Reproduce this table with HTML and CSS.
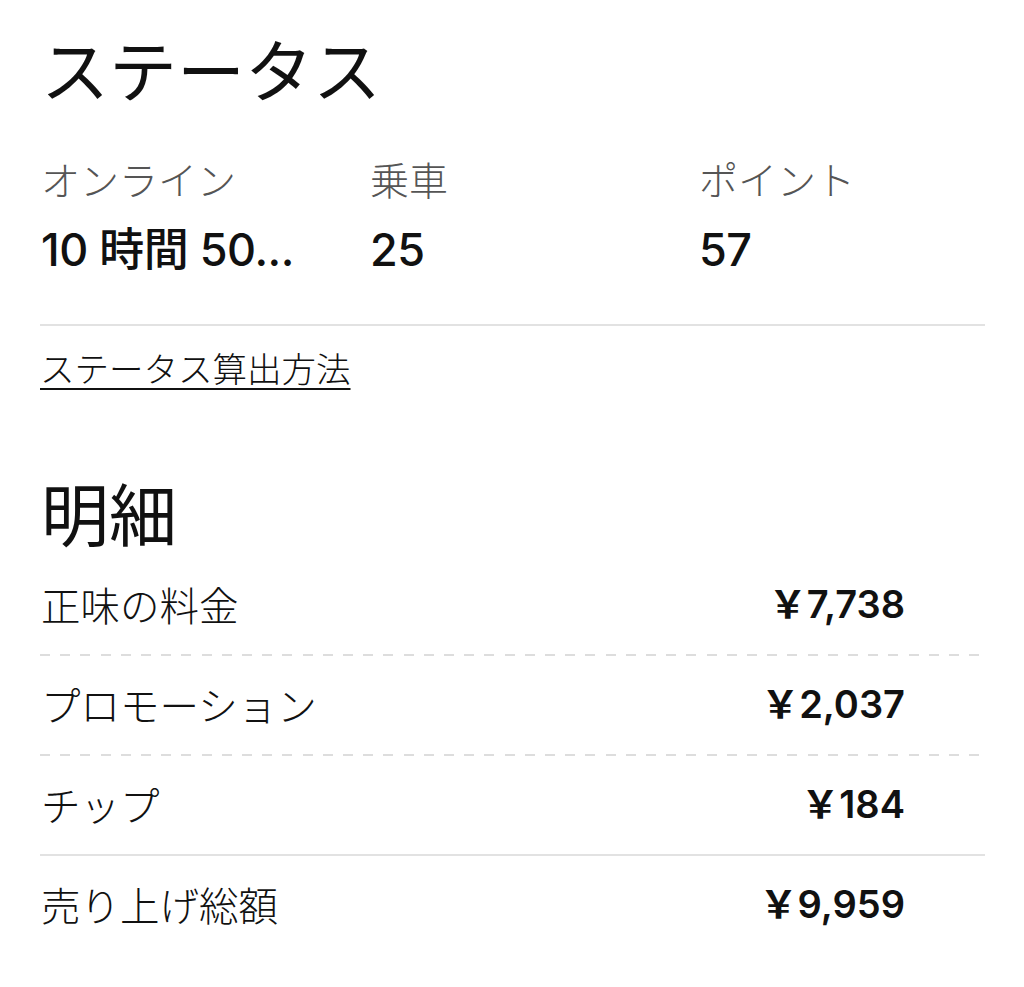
FILE: index.html
```html
<!DOCTYPE html>
<html lang="ja">
<head>
<meta charset="utf-8">
<title>ステータス</title>
<link rel="stylesheet" href="styles.css">
</head>
<body>
<main class="page">
  <h1 class="title">ステータス</h1>
  <section class="stats">
    <div class="stat">
      <div class="stat-label">オンライン</div>
      <div class="stat-value">10 時間 50...</div>
    </div>
    <div class="stat">
      <div class="stat-label">乗車</div>
      <div class="stat-value">25</div>
    </div>
    <div class="stat">
      <div class="stat-label">ポイント</div>
      <div class="stat-value">57</div>
    </div>
  </section>
  <a class="link" href="#">ステータス算出方法</a>

  <h2 class="title title-detail">明細</h2>
  <section class="rows">
    <div class="row dashed">
      <span class="row-label">正味の料金</span>
      <span class="row-amount">￥7,738</span>
    </div>
    <div class="row dashed">
      <span class="row-label">プロモーション</span>
      <span class="row-amount">￥2,037</span>
    </div>
    <div class="row solid">
      <span class="row-label">チップ</span>
      <span class="row-amount">￥184</span>
    </div>
    <div class="row">
      <span class="row-label">売り上げ総額</span>
      <span class="row-amount">￥9,959</span>
    </div>
  </section>
</main>
</body>
</html>
```

FILE: styles.css
```css
html, body {
  margin: 0;
  padding: 0;
  background: #ffffff;
}

body {
  font-family: "Noto Sans CJK JP", "Noto Sans", sans-serif;
  color: #111111;
}

.page {
  width: 945px;
  padding: 28px 0 0 40px;
}

.title {
  margin: 0;
  font-size: 68px;
  line-height: 80px;
  font-weight: 400;
  color: #111111;
  padding-left: 1px;
}

.stats {
  display: grid;
  grid-template-columns: 288px 288px 288px;
  column-gap: 41px;
  padding: 46px 0 46px 1px;
  border-bottom: 2px solid #e2e2e2;
}

.stat {
  min-width: 0;
}

.stat-label {
  font-size: 39px;
  line-height: 48px;
  font-weight: 300;
  color: #555555;
  white-space: nowrap;
}

.stat-value {
  margin-top: 20px;
  font-family: "Inter", "Noto Sans CJK JP", sans-serif;
  font-size: 45px;
  line-height: 56px;
  font-weight: 500;
  color: #111111;
  white-space: nowrap;
  letter-spacing: -0.5px;
}

.link {
  display: inline-block;
  margin-top: 19px;
  font-size: 34.5px;
  line-height: 44px;
  font-weight: 300;
  color: #111111;
  text-decoration: underline;
  text-decoration-thickness: 2px;
  text-underline-offset: 6px;
}

.title-detail {
  margin-top: 83px;
}

.rows {
  margin-top: 4px;
}

.row {
  display: flex;
  justify-content: space-between;
  align-items: center;
  padding: 24px 80px 26px 1px;
  height: 48px;
}

.row.dashed {
  background-image: repeating-linear-gradient(to right, #dddddd 0 10px, transparent 10px 20.2px);
  background-size: 942px 2px;
  background-repeat: no-repeat;
  background-position: left bottom;
  padding-bottom: 28px;
}

.row.solid {
  border-bottom: 2px solid #e2e2e2;
}

.row-label {
  font-size: 39.5px;
  line-height: 48px;
  font-weight: 300;
  color: #111111;
}

.row-amount {
  font-family: "Inter", "Noto Sans CJK JP", sans-serif;
  font-size: 38px;
  line-height: 48px;
  font-weight: 600;
  color: #111111;
}
```
